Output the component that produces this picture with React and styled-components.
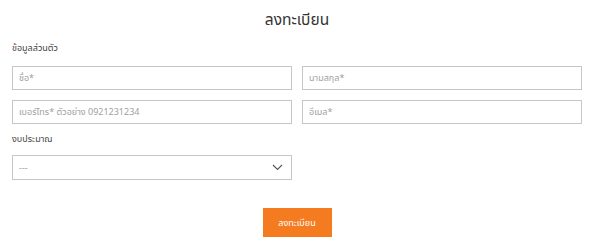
import React from 'react';
import styled, { createGlobalStyle } from 'styled-components';

const GlobalStyle = createGlobalStyle`
  body {
    margin: 0;
    background: #fff;
    font-family: "Noto Sans Thai", "Noto Sans", "DejaVu Sans", sans-serif;
  }
`;

const Page = styled.div`
  width: 570px;
  padding: 0 18px 0 12px;
`;

const Title = styled.h1`
  margin: 0;
  padding-top: 9px;
  height: 36px;
  box-sizing: border-box;
  text-align: center;
  font-size: 15.5px;
  font-weight: 400;
  color: #333;
`;

const SectionLabel = styled.div`
  box-sizing: border-box;
  font-size: 9px;
  color: #444;
  height: ${(p) => p.$h}px;
  padding-top: ${(p) => p.$top}px;
  line-height: 16px;
`;

const Grid = styled.div`
  display: grid;
  grid-template-columns: 280px 280px;
  column-gap: 10px;
  row-gap: 10px;
`;

const Field = styled.input`
  box-sizing: border-box;
  height: 24px;
  width: 100%;
  border: 1px solid #c6c6c6;
  padding: 0 6px;
  font-family: inherit;
  font-size: 9px;
  color: #333;
  outline: none;
  &::placeholder {
    color: #a0a0a0;
  }
`;

const SelectBox = styled.div`
  box-sizing: border-box;
  width: 280px;
  height: 25px;
  border: 1px solid #c6c6c6;
  padding: 0 8px 0 6px;
  display: flex;
  align-items: center;
  justify-content: space-between;
  font-size: 9px;
  color: #a0a0a0;
`;

const Actions = styled.div`
  display: flex;
  justify-content: center;
  padding-top: 28px;
`;

const Button = styled.button`
  width: 69px;
  height: 29px;
  border: none;
  background: #f47b20;
  color: #fff;
  font-family: inherit;
  font-size: 9px;
  cursor: pointer;
`;

const Chevron = () => (
  <svg width="11" height="7" viewBox="0 0 11 7" fill="none">
    <path d="M1 1l4.5 4.5L10 1" stroke="#555" strokeWidth="1.1" />
  </svg>
);

const App = () => {
  return (
    <>
      <GlobalStyle />
      <Page>
        <Title>ลงทะเบียน</Title>
        <SectionLabel $h={30} $top={4}>ข้อมูลส่วนตัว</SectionLabel>
        <Grid>
          <Field placeholder="ชื่อ*" />
          <Field placeholder="นามสกุล*" />
          <Field placeholder="เบอร์โทร* ตัวอย่าง 0921231234" />
          <Field placeholder="อีเมล*" />
        </Grid>
        <SectionLabel $h={31} $top={7}>งบประมาณ</SectionLabel>
        <SelectBox>
          <span>---</span>
          <Chevron />
        </SelectBox>
        <Actions>
          <Button>ลงทะเบียน</Button>
        </Actions>
      </Page>
    </>
  );
};

export default App;
